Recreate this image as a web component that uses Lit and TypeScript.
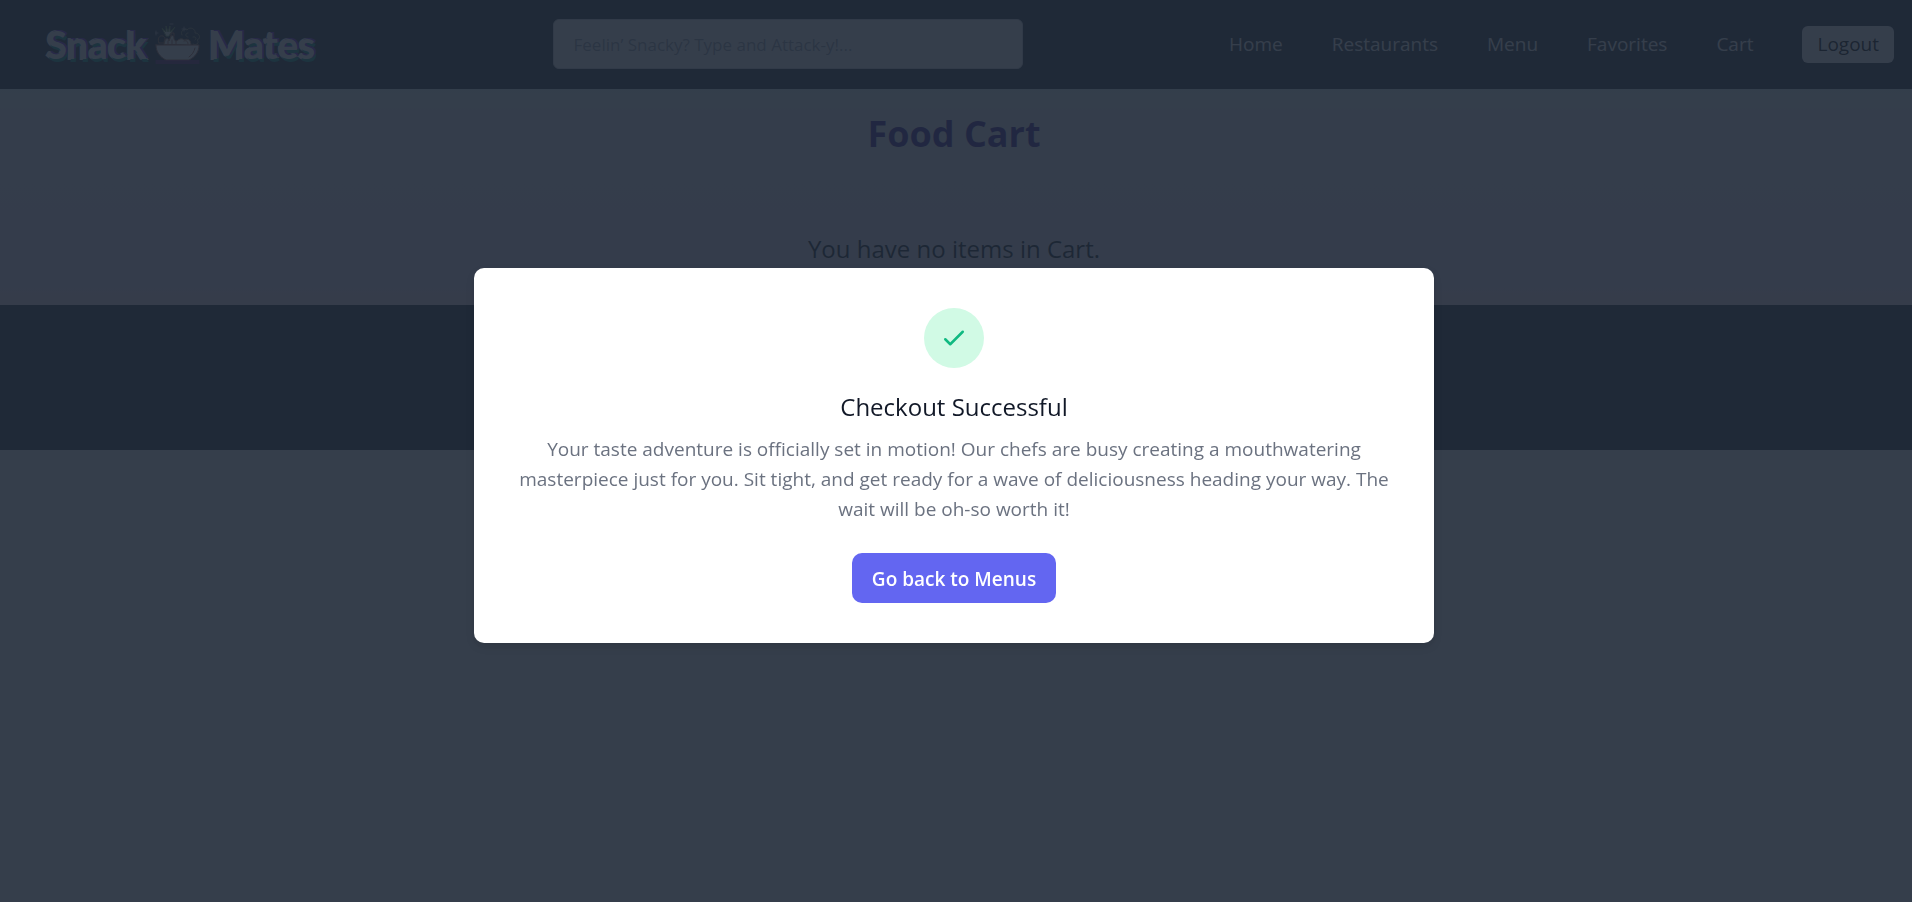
import { LitElement, html, css, svg } from "lit";
import { customElement } from "lit/decorators.js";

const links = ["Home", "Restaurants", "Menu", "Favorites", "Cart"];

@customElement("brand-logo")
export class BrandLogo extends LitElement {
  static styles = css`
    :host { display: flex; align-items: center; gap: 8px; width: 300px; }
    .word {
      font: 900 38px/48px Lato, "Open Sans", sans-serif;
      color: #fff;
      -webkit-text-stroke: 2px #fff;
      paint-order: stroke fill;
      text-shadow: 2px -1px 0 #6d28d9, 2px 3px 0 #0d9488;
    }
    .bowl { width: 46px; height: 42px; flex: none; }
  `;
  render() {
    return html`
      <span class="word">Snack</span>
      <svg class="bowl" viewBox="0 0 46 42" fill="none" stroke-width="1" stroke-linecap="round" aria-hidden="true">
        ${svg`
        <path d="M11 13L7 5l4 4V3l2 6 2-6v6l5-5-6 9z" fill="#d9e3cf" stroke="#6b8e4e"/>
        <path d="M4 20c-2-4 0-8 4-7 2 1 3 3 1 5M4 20h6" stroke="#a8754f"/>
        <path d="M9 21c1-6 4-7 5-3l2-5c2-1 3 0 3 3 1 2 2 3 4 1 3-2 5-1 6 0 4-2 7 0 7 5z" fill="#e8e4e0" stroke="#a8754f"/>
        <path d="M16 13v-3h3v3M13 18v3M17 17v4M21 18v3M29 18c2-1 4 0 4 3" stroke="#b06a4c"/>
        <path d="M27 12c-2-4 2-7 5-5 3-4 9-1 8 3 5 0 6 6 2 7 3 3-1 6-4 4M33 10c-3 0-3 4 0 4M38 14c3-1 4 2 2 3" stroke="#8f8a63"/>
        <path d="M1 22h43c0 7-4 12-10 15H11C5 34 1 29 1 22z" fill="#fff" stroke="#a8654f"/>
        <path d="M40 25c-1 4-3 7-6 9" stroke="#a8654f"/>
        <path d="M1 8v4M-1 10h4M29 4v4M27 6h4M15 1h3" stroke="#999"/>
        <path d="M1 38h43M1 40h43" stroke="#a21caf"/>`}
      </svg>
      <span class="word">Mates</span>
    `;
  }
}

@customElement("app-root")
export class AppRoot extends LitElement {
  static styles = css`
    :host {
      display: block;
      min-height: 100vh;
      background: #fff;
      font-family: "Segoe UI", "Open Sans", "Noto Sans", sans-serif;
      font-size: 19px;
      line-height: 30px;
    }
    * { box-sizing: border-box; }
    h1, h2, p { margin: 0; }
    button, input { font: inherit; }
    .bar {
      display: flex;
      justify-content: space-between;
      align-items: center;
      padding: 19px 18px 20px 46px;
      background: #1f2937;
    }
    .search {
      width: 470px;
      height: 50px;
      padding: 0 20px;
      border: 1px solid #d1d5db;
      border-radius: 6px;
      background: #fff;
      font-size: 17px;
    }
    .search::placeholder { color: #9ca3af; opacity: 1; }
    .nav { display: flex; align-items: center; gap: 49px; }
    .link { color: #fff; text-decoration: none; }
    .logout {
      height: 37px;
      padding: 0 15px;
      border: 0;
      border-radius: 6px;
      background: #fff;
      color: #000;
    }
    .main {
      display: flex;
      flex-direction: column;
      align-items: center;
      gap: 72px;
      padding: 20px 4px 38px 0;
      background: linear-gradient(#ecfdf9, #f5effa 20%, #f0eafa 80%, #fae4f5);
      text-align: center;
    }
    .title { font-size: 36px; line-height: 50px; font-weight: 700; color: #3b1d95; }
    .empty { font-size: 24px; line-height: 36px; color: #111827; }
    .foot { height: 145px; background: #1f2937; }
    .overlay {
      position: fixed;
      inset: 0;
      display: flex;
      align-items: center;
      justify-content: center;
      padding: 8px 4px 0 0;
      background: rgb(31 41 55 / 0.9);
    }
    .dialog {
      display: flex;
      flex-direction: column;
      align-items: center;
      width: 960px;
      max-width: 100%;
      padding: 40px;
      border-radius: 10px;
      background: #fff;
      box-shadow: 0 4px 8px rgb(0 0 0 / 0.12);
      text-align: center;
    }
    .badge {
      display: grid;
      place-items: center;
      width: 60px;
      height: 60px;
      border-radius: 50%;
      background: #d1fae5;
      color: #10b981;
    }
    .tick { width: 30px; height: 30px; }
    .heading { margin-top: 20px; font-size: 24px; line-height: 38px; font-weight: 500; color: #111827; }
    .text { margin-top: 8px; color: #6b7280; }
    .back {
      height: 50px;
      margin-top: 29px;
      padding: 2px 20px 0;
      border: 0;
      border-radius: 10px;
      background: #6366f1;
      color: #fff;
      font-weight: 600;
    }
  `;
  render() {
    return html`
      <header class="bar">
        <brand-logo></brand-logo>
        <input class="search" type="search" aria-label="Search" placeholder="Feelin’ Snacky? Type and Attack-y!..." />
        <nav class="nav">
          ${links.map((l) => html`<a class="link" href="#">${l}</a>`)}
          <button class="logout">Logout</button>
        </nav>
      </header>
      <main class="main">
        <h1 class="title">Food Cart</h1>
        <p class="empty">You have no items in Cart.</p>
      </main>
      <footer class="foot"></footer>
      <div class="overlay">
        <section class="dialog" role="dialog" aria-modal="true" aria-labelledby="done">
          <div class="badge">
            <svg class="tick" viewBox="0 0 24 24" fill="none" stroke="currentColor" stroke-width="2" stroke-linecap="round" stroke-linejoin="round" aria-hidden="true">
              <path d="M5 13l4 4L19 7" />
            </svg>
          </div>
          <h2 class="heading" id="done">Checkout Successful</h2>
          <p class="text">
            Your taste adventure is officially set in motion! Our chefs are busy creating a mouthwatering
            masterpiece just for you. Sit tight, and get ready for a wave of deliciousness heading your way.
            The wait will be oh-so worth it!
          </p>
          <button class="back">Go back to Menus</button>
        </section>
      </div>
    `;
  }
}
